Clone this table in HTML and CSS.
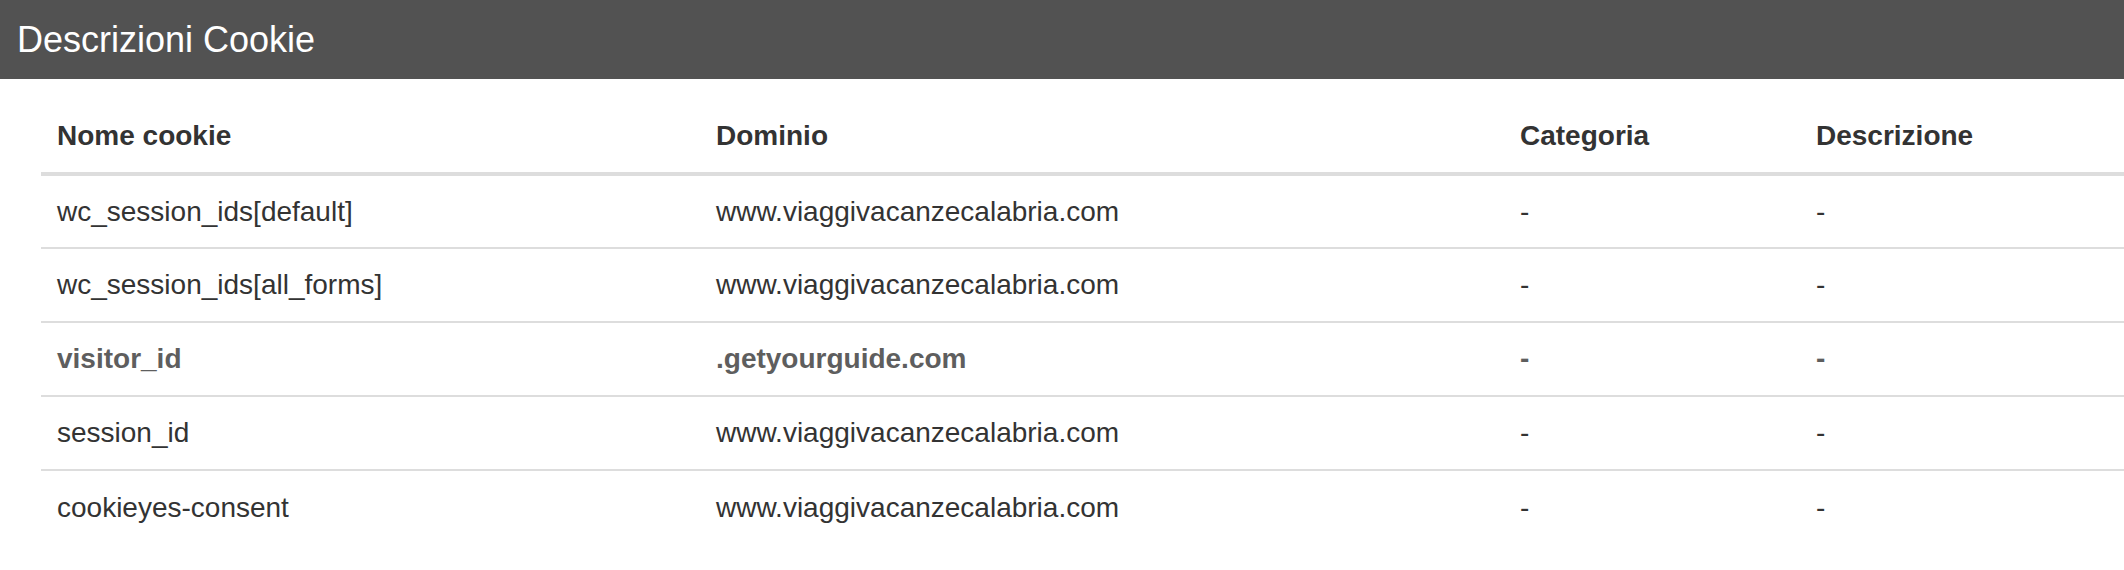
FILE: index.html
```html
<!DOCTYPE html>
<html lang="it">
<head>
  <meta charset="UTF-8">
  <title>Descrizioni Cookie</title>
  <link rel="stylesheet" href="styles.css">
</head>
<body>

  <div class="topbar">
    <h1>Descrizioni Cookie</h1>
  </div>

  <div class="table-wrap">
    <table class="cookie-table">
      <thead>
        <tr>
          <th class="col-name">Nome cookie</th>
          <th class="col-domain">Dominio</th>
          <th class="col-cat">Categoria</th>
          <th class="col-desc">Descrizione</th>
        </tr>
      </thead>
      <tbody>
        <tr>
          <td>wc_session_ids[default]</td>
          <td>www.viaggivacanzecalabria.com</td>
          <td>-</td>
          <td>-</td>
        </tr>
        <tr>
          <td>wc_session_ids[all_forms]</td>
          <td>www.viaggivacanzecalabria.com</td>
          <td>-</td>
          <td>-</td>
        </tr>
        <tr class="third-party">
          <td>visitor_id</td>
          <td>.getyourguide.com</td>
          <td>-</td>
          <td>-</td>
        </tr>
        <tr>
          <td>session_id</td>
          <td>www.viaggivacanzecalabria.com</td>
          <td>-</td>
          <td>-</td>
        </tr>
        <tr>
          <td>cookieyes-consent</td>
          <td>www.viaggivacanzecalabria.com</td>
          <td>-</td>
          <td>-</td>
        </tr>
      </tbody>
    </table>
  </div>

</body>
</html>
```

FILE: styles.css
```css
body {
  margin: 0;
  font-family: "Liberation Sans", Arial, sans-serif;
  background: #fff;
  color: #333;
}

.topbar {
  height: 79px;
  background: #525252;
  display: flex;
  align-items: center;
  padding: 0 17px;
}

.topbar h1 {
  margin: 0;
  font-size: 36px;
  font-weight: normal;
  color: #fff;
}

.table-wrap {
  padding: 21px 0 0 41px;
}

.cookie-table {
  width: 100%;
  border-collapse: collapse;
  table-layout: fixed;
}

.cookie-table th,
.cookie-table td {
  box-sizing: border-box;
  height: 74px;
  padding: 0 16px;
  text-align: left;
  vertical-align: middle;
  font-size: 28px;
}

.cookie-table th {
  font-weight: bold;
  border-bottom: 4px solid #ddd;
}

.cookie-table td {
  border-bottom: 2px solid #ddd;
}

.cookie-table tbody tr:last-child td {
  border-bottom: none;
}

.col-name { width: 659px; }
.col-domain { width: 804px; }
.col-cat { width: 296px; }

.third-party td {
  font-weight: bold;
  color: #5e5e5e;
}
```
